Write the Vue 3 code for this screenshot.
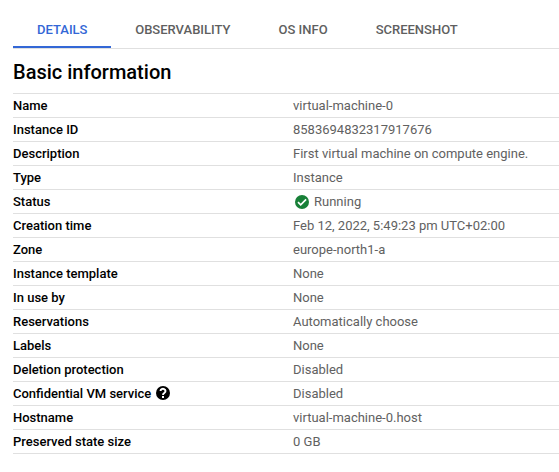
<script setup>
const tabs = ['DETAILS', 'OBSERVABILITY', 'OS INFO', 'SCREENSHOT']
const rows = [
  { label: 'Name', value: 'virtual-machine-0' },
  { label: 'Instance ID', value: '8583694832317917676' },
  { label: 'Description', value: 'First virtual machine on compute engine.' },
  { label: 'Type', value: 'Instance' },
  { label: 'Status', value: 'Running', ok: true },
  { label: 'Creation time', value: 'Feb 12, 2022, 5:49:23 pm UTC+02:00' },
  { label: 'Zone', value: 'europe-north1-a' },
  { label: 'Instance template', value: 'None' },
  { label: 'In use by', value: 'None' },
  { label: 'Reservations', value: 'Automatically choose' },
  { label: 'Labels', value: 'None' },
  { label: 'Deletion protection', value: 'Disabled' },
  { label: 'Confidential VM service', value: 'Disabled', help: true },
  { label: 'Hostname', value: 'virtual-machine-0.host' },
  { label: 'Preserved state size', value: '0 GB' },
]
</script>

<template>
  <main class="page">
    <nav class="tabs">
      <a v-for="(tab, i) in tabs" :key="tab" class="tab" :class="{ active: i === 0 }">{{ tab }}</a>
    </nav>
    <h2 class="title">Basic information</h2>
    <dl class="list">
      <div v-for="row in rows" :key="row.label" class="row">
        <dt class="label">
          {{ row.label }}
          <svg v-if="row.help" class="help" viewBox="0 0 14 14">
            <circle cx="7" cy="7" r="7" />
            <path d="M4.5 5a2.5 2.2 0 1 1 4 1.8Q7 7.6 7 9" />
            <rect x="6" y="10" width="2" height="2" />
          </svg>
        </dt>
        <dd class="value">
          <svg v-if="row.ok" class="ok" viewBox="0 0 14 14">
            <circle cx="7" cy="7" r="7" />
            <path d="M3 7.2L5.7 9.9L11.1 4.4" />
          </svg>
          {{ row.value }}
        </dd>
      </div>
    </dl>
  </main>
</template>

<style>
body {
  background: #fff;
}
</style>

<style scoped>
.page {
  box-sizing: border-box;
  height: 472px;
  padding-left: 13px;
  overflow: hidden;
  font-family: Roboto, sans-serif;
  font-size: 13px;
}
.tabs {
  box-sizing: border-box;
  display: flex;
  height: 49px;
  padding-top: 12px;
  border-bottom: 1px solid #e0e0e0;
}
.tab {
  box-sizing: border-box;
  height: 36px;
  padding: 0 24px;
  line-height: 36px;
  font-weight: 500;
  color: #5f5f5f;
}
.tab.active {
  padding-right: 23.7px;
  color: #3367d6;
  border-bottom: 2px solid #3367d6;
}
.title {
  margin: 0;
  height: 44px;
  line-height: 46px;
  font-size: 20px;
  font-weight: 500;
  color: #000;
}
.list {
  margin: 0;
  border-top: 1px solid #e0e0e0;
}
.row {
  box-sizing: border-box;
  display: grid;
  grid-template-columns: 280px 1fr;
  height: 24px;
  border-bottom: 1px solid #e0e0e0;
}
.label,
.value {
  display: flex;
  align-items: center;
  margin: 0;
  line-height: 23px;
  white-space: nowrap;
}
.label {
  font-weight: 500;
  color: #000;
}
.value {
  color: #616161;
}
.help,
.ok {
  width: 14px;
  height: 14px;
  fill: none;
}
.help {
  margin: 0 0 1px 5px;
}
.help circle {
  fill: #000;
}
.help rect {
  fill: #fff;
}
.help path {
  stroke: #fff;
  stroke-width: 1.9;
}
.ok {
  margin: 1px 5px 0 2px;
}
.ok circle {
  fill: #188038;
}
.ok path {
  stroke: #fff;
  stroke-width: 1.7;
}
</style>
